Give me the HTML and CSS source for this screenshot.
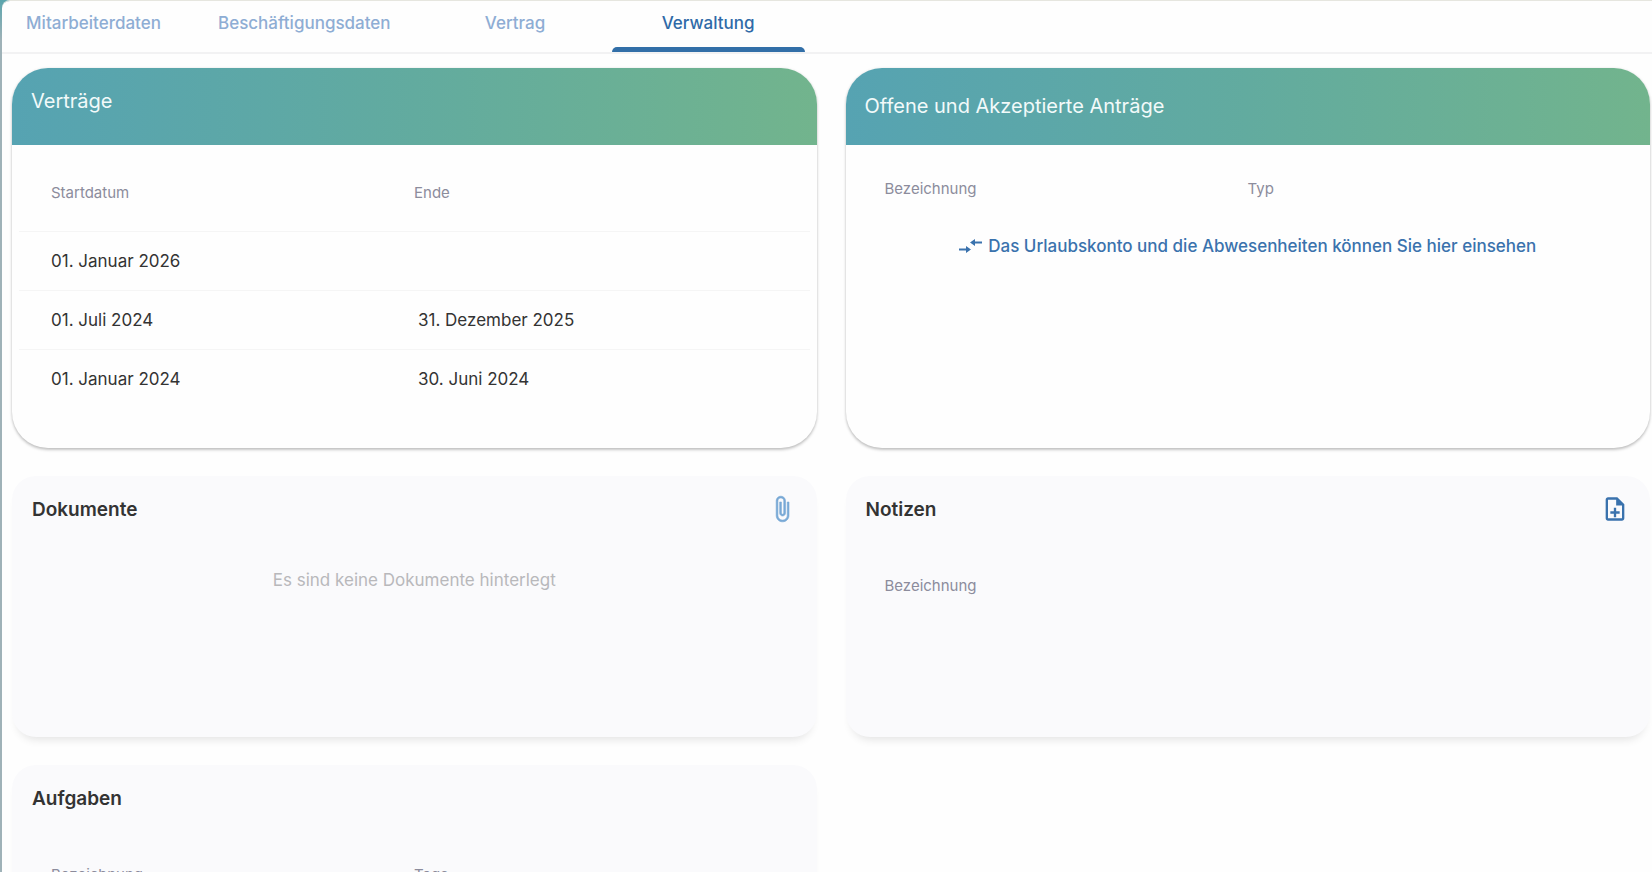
FILE: index.html
```
<!DOCTYPE html>
<html lang="de">

<head>
    <meta charset="utf-8">
    <meta name="viewport" content="width=device-width, initial-scale=1">
    <title>Verwaltung</title>
    <link rel="stylesheet" href="styles.css">
</head>

<body>
    <div class="panel">
        <nav class="tabs">
            <a class="tab" href="#mitarbeiterdaten">Mitarbeiterdaten</a>
            <a class="tab" href="#beschaeftigungsdaten">Beschäftigungsdaten</a>
            <a class="tab" href="#vertrag">Vertrag</a>
            <a class="tab active" href="#verwaltung" aria-current="page">Verwaltung</a>
        </nav>
        <main class="cards">
            <section class="card">
                <h2 class="card-header">Verträge</h2>
                <table class="list contracts">
                    <thead>
                        <tr>
                            <th>Startdatum</th>
                            <th>Ende</th>
                        </tr>
                    </thead>
                    <tbody>
                        <tr>
                            <td>01. Januar 2026</td>
                            <td></td>
                        </tr>
                        <tr>
                            <td>01. Juli 2024</td>
                            <td>31. Dezember 2025</td>
                        </tr>
                        <tr>
                            <td>01. Januar 2024</td>
                            <td>30. Juni 2024</td>
                        </tr>
                    </tbody>
                </table>
            </section>

            <section class="card">
                <h2 class="card-header tall">Offene und Akzeptierte Anträge</h2>
                <table class="list">
                    <thead>
                        <tr>
                            <th>Bezeichnung</th>
                            <th>Typ</th>
                        </tr>
                    </thead>
                </table>
                <a class="account-link" href="#urlaubskonto">
                    <svg width="23" height="16" viewBox="0 0 23 16" aria-hidden="true">
                        <path d="M0 10.500h7V8l5 3.500-5 3.500v-2.500H0zM23 3.500h-7V1l-5 3.500 5 3.500V5.500h7z" />
                    </svg>
                    Das Urlaubskonto und die Abwesenheiten können Sie hier einsehen
                </a>
            </section>

            <section class="card soft">
                <div class="soft-header">
                    <h2>Dokumente</h2>
                    <button class="icon-button light" type="button" aria-label="Dokument anhängen">
                        <svg width="28" height="28" viewBox="0 0 24 24">
                            <path d="M16.500 6v11.500c0 2.210-1.790 4-4 4s-4-1.790-4-4V5c0-1.380 1.120-2.500 2.500-2.500s2.500 1.120 2.500 2.500v10.500c0 .55-.45 1-1 1s-1-.45-1-1V6H10v9.500c0 1.380 1.120 2.500 2.500 2.500s2.500-1.120 2.500-2.500V5c0-2.210-1.790-4-4-4S7 2.790 7 5v12.500c0 3.040 2.460 5.500 5.500 5.500s5.500-2.460 5.500-5.500V6h-1.500z" />
                        </svg>
                    </button>
                </div>
                <p class="empty">Es sind keine Dokumente hinterlegt</p>
            </section>

            <section class="card soft">
                <div class="soft-header">
                    <h2>Notizen</h2>
                    <button class="icon-button" type="button" aria-label="Notiz hinzufügen">
                        <svg width="28" height="28" viewBox="0 0 24 24">
                            <path d="M13 11h-2v3H8v2h3v3h2v-3h3v-2h-3zm1-9H6c-1.100 0-2 .9-2 2v16c0 1.100.89 2 1.990 2H18c1.100 0 2-.9 2-2V8zm4 18H6V4h7v5h5z" />
                        </svg>
                    </button>
                </div>
                <table class="list">
                    <thead>
                        <tr>
                            <th>Bezeichnung</th>
                        </tr>
                    </thead>
                </table>
            </section>

            <section class="card soft">
                <div class="soft-header">
                    <h2>Aufgaben</h2>
                </div>
                <table class="list">
                    <thead>
                        <tr>
                            <th>Bezeichnung</th>
                            <th>Tags</th>
                        </tr>
                    </thead>
                </table>
            </section>
        </main>
    </div>
</body>

</html>
```
FILE: styles.css
```
* {
    box-sizing: border-box;
}

body {
    margin: 0;
    background: linear-gradient(to bottom, #5aa5ad, #9fb2b8 40px);
    font-family: Inter, "Open Sans", sans-serif;
    color: #333;
}

.panel {
    height: 100vh;
    margin-left: 2px;
    background: #fefefe;
    border-top: 1px solid #e6e6df;
    border-top-left-radius: 8px;
    overflow: hidden auto;
    scrollbar-width: none;
}

/* tabs */
.tabs {
    display: flex;
    margin-left: -5px;
    border-bottom: 2px solid #f2f2f3;
}

.tab {
    position: relative;
    min-width: 193px;
    height: 51px;
    padding: 0 28px;
    font-size: 17px;
    font-weight: 500;
    line-height: 44px;
    text-align: center;
    text-decoration: none;
    color: #8eadd4;
}

.tab.active {
    color: #2f6aa8;
}

.tab.active::after {
    content: "";
    position: absolute;
    left: 0;
    right: 0;
    bottom: 0;
    height: 5px;
    border-radius: 5px 5px 0 0;
    background: #326fa8;
}

/* cards */
.cards {
    display: grid;
    grid-template-columns: 1fr 1fr;
    column-gap: 29px;
    row-gap: 28px;
    padding: 14px 2px 28px 10px;
}

.card {
    min-height: 380px;
    border-radius: 36px;
    background: #fefefe;
    box-shadow: 0 2px 3px rgba(0, 0, 0, 0.22), 0 0 3px rgba(0, 0, 0, 0.08);
    overflow: hidden;
}

.card-header {
    height: 77px;
    margin: 0;
    padding: 0 19px;
    background: linear-gradient(to right, #56a3b2, #62ab9f 50%, #72b48d);
    color: #f2fafa;
    font-size: 20px;
    font-weight: 400;
    line-height: 66px;
}

.card-header.tall {
    line-height: 76px;
}

.card.soft {
    min-height: 261px;
    border-radius: 24px;
    background: #fafafc;
    box-shadow: 0 8px 10px -6px rgba(0, 0, 0, 0.12);
}

.soft-header {
    display: flex;
    align-items: center;
    justify-content: space-between;
    height: 66px;
    padding: 0 21px 0 20px;
}

.soft-header h2 {
    margin: 0;
    font-size: 19px;
    font-weight: 600;
}

.icon-button {
    display: flex;
    padding: 0;
    border: none;
    background: none;
    color: #3a72ad;
    cursor: pointer;
}

.icon-button.light {
    color: #79a9d6;
    stroke: currentColor;
    stroke-width: 0.5;
}

svg {
    fill: currentColor;
}

/* tables */
.list {
    width: calc(100% - 14px);
    margin: 0 7px;
    border-collapse: collapse;
    table-layout: fixed;
}

.list th,
.list td {
    padding: 0 31px 0 32px;
    text-align: left;
}

.list th {
    height: 86px;
    font-size: 15px;
    font-weight: 400;
    color: #8c8c9c;
}

.list th + th {
    padding-left: 0;
}

.list th:first-child:not(:last-child) {
    width: 395px;
}

.contracts th {
    padding-top: 10px;
}

.list td {
    height: 59px;
    font-size: 17px;
}

.contracts tbody td {
    border-top: 1px solid #f5f5f5;
}

.contracts td + td {
    padding-left: 4px;
}

.account-link {
    display: flex;
    justify-content: center;
    align-items: center;
    gap: 6px;
    font-size: 17px;
    font-weight: 500;
    line-height: 30px;
    text-decoration: none;
    color: #3a72ad;
}

.empty {
    margin: 26px 0;
    text-align: center;
    font-size: 17px;
    line-height: 24px;
    color: #b8b8bb;
}
```
